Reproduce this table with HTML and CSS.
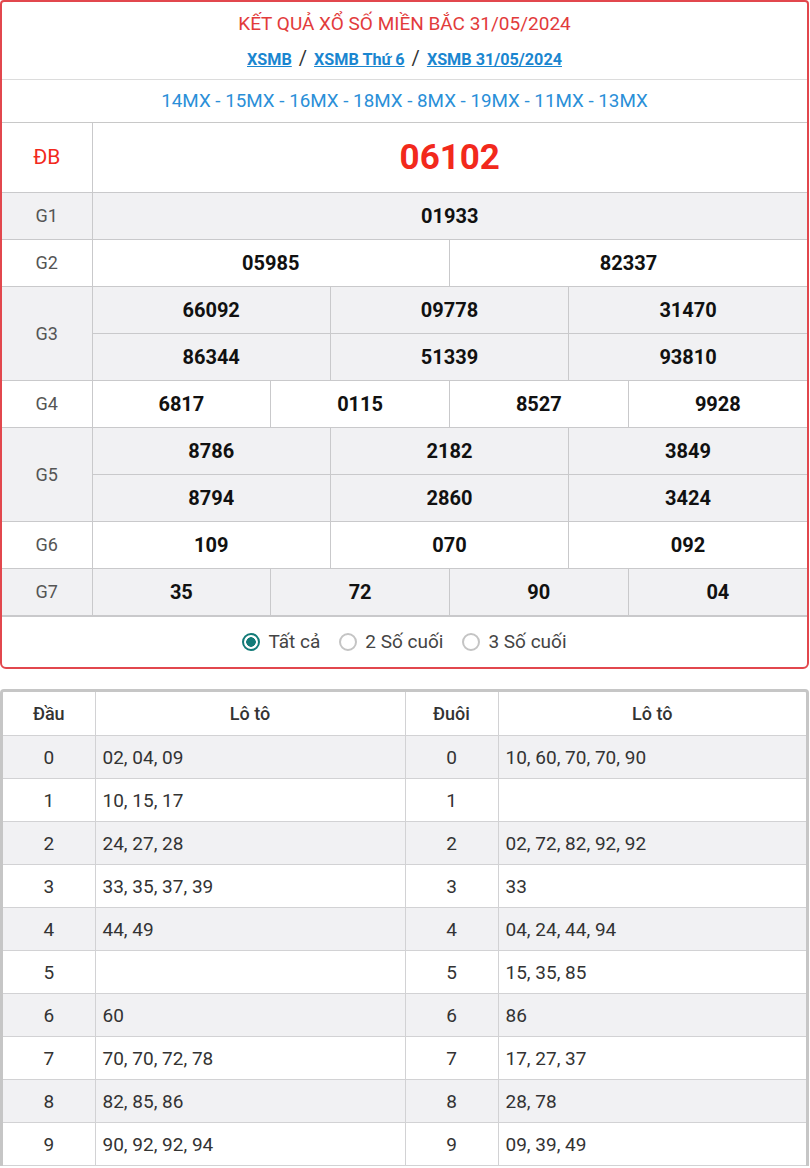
FILE: index.html
```html
<!DOCTYPE html>
<html lang="vi">
<head>
<meta charset="utf-8">
<title>XSMB 31/05/2024</title>
<link rel="stylesheet" href="styles.css">
</head>
<body>
<div class="card result">
  <div class="head">
    <h1 class="title">KẾT QUẢ XỔ SỐ MIỀN BẮC 31/05/2024</h1>
    <div class="links"><a href="#">XSMB</a><span class="sep">/</span><a href="#">XSMB Thứ 6</a><span class="sep">/</span><a href="#">XSMB 31/05/2024</a></div>
  </div>
  <div class="codes">14MX - 15MX - 16MX - 18MX - 8MX - 19MX - 11MX - 13MX</div>
  <table class="prizes">
    <colgroup>
      <col class="c-label">
      <col><col><col><col><col><col><col><col><col><col><col><col>
    </colgroup>
    <tr class="row-db">
      <td class="lbl db-lbl">ĐB</td>
      <td class="num db-num" colspan="12">06102</td>
    </tr>
    <tr class="alt">
      <td class="lbl">G1</td>
      <td class="num" colspan="12">01933</td>
    </tr>
    <tr>
      <td class="lbl">G2</td>
      <td class="num" colspan="6">05985</td>
      <td class="num" colspan="6">82337</td>
    </tr>
    <tr class="alt">
      <td class="lbl" rowspan="2">G3</td>
      <td class="num" colspan="4">66092</td>
      <td class="num" colspan="4">09778</td>
      <td class="num" colspan="4">31470</td>
    </tr>
    <tr class="alt">
      <td class="num" colspan="4">86344</td>
      <td class="num" colspan="4">51339</td>
      <td class="num" colspan="4">93810</td>
    </tr>
    <tr>
      <td class="lbl">G4</td>
      <td class="num" colspan="3">6817</td>
      <td class="num" colspan="3">0115</td>
      <td class="num" colspan="3">8527</td>
      <td class="num" colspan="3">9928</td>
    </tr>
    <tr class="alt">
      <td class="lbl" rowspan="2">G5</td>
      <td class="num" colspan="4">8786</td>
      <td class="num" colspan="4">2182</td>
      <td class="num" colspan="4">3849</td>
    </tr>
    <tr class="alt">
      <td class="num" colspan="4">8794</td>
      <td class="num" colspan="4">2860</td>
      <td class="num" colspan="4">3424</td>
    </tr>
    <tr>
      <td class="lbl">G6</td>
      <td class="num" colspan="4">109</td>
      <td class="num" colspan="4">070</td>
      <td class="num" colspan="4">092</td>
    </tr>
    <tr class="alt">
      <td class="lbl">G7</td>
      <td class="num" colspan="3">35</td>
      <td class="num" colspan="3">72</td>
      <td class="num" colspan="3">90</td>
      <td class="num" colspan="3">04</td>
    </tr>
  </table>
  <div class="filters">
    <label class="opt"><span class="radio checked"></span>Tất cả</label>
    <label class="opt"><span class="radio"></span>2 Số cuối</label>
    <label class="opt"><span class="radio"></span>3 Số cuối</label>
  </div>
</div>

<div class="card loto">
  <table class="lototable">
    <colgroup>
      <col class="c-head"><col class="c-list"><col class="c-tail"><col class="c-list2">
    </colgroup>
    <tr class="lhead">
      <th>Đầu</th><th>Lô tô</th><th>Đuôi</th><th>Lô tô</th>
    </tr>
    <tr class="alt"><td class="d">0</td><td class="l">02, 04, 09</td><td class="d">0</td><td class="l">10, 60, 70, 70, 90</td></tr>
    <tr><td class="d">1</td><td class="l">10, 15, 17</td><td class="d">1</td><td class="l"></td></tr>
    <tr class="alt"><td class="d">2</td><td class="l">24, 27, 28</td><td class="d">2</td><td class="l">02, 72, 82, 92, 92</td></tr>
    <tr><td class="d">3</td><td class="l">33, 35, 37, 39</td><td class="d">3</td><td class="l">33</td></tr>
    <tr class="alt"><td class="d">4</td><td class="l">44, 49</td><td class="d">4</td><td class="l">04, 24, 44, 94</td></tr>
    <tr><td class="d">5</td><td class="l"></td><td class="d">5</td><td class="l">15, 35, 85</td></tr>
    <tr class="alt"><td class="d">6</td><td class="l">60</td><td class="d">6</td><td class="l">86</td></tr>
    <tr><td class="d">7</td><td class="l">70, 70, 72, 78</td><td class="d">7</td><td class="l">17, 27, 37</td></tr>
    <tr class="alt"><td class="d">8</td><td class="l">82, 85, 86</td><td class="d">8</td><td class="l">28, 78</td></tr>
    <tr><td class="d">9</td><td class="l">90, 92, 92, 94</td><td class="d">9</td><td class="l">09, 39, 49</td></tr>
  </table>
</div>
</body>
</html>
```

FILE: styles.css
```css
* { box-sizing: border-box; }
html, body { margin: 0; padding: 0; background: #fff; }
body {
  font-family: Roboto, "Noto Sans", Arial, sans-serif;
  color: #222;
  width: 810px;
}

.card {
  width: 809px;
  background: #fff;
  overflow: hidden;
}

.result {
  border: 2px solid #e2474d;
  border-radius: 4px 4px 6px 6px;
}

.head {
  height: 78px;
  border-bottom: 1px solid #dcdcdc;
  display: flex;
  flex-direction: column;
  align-items: center;
  padding-top: 10px;
}
.title {
  margin: 0;
  font-size: 19px;
  font-weight: 400;
  color: #e23b3b;
  line-height: 24px;
}
.links {
  margin-top: 11px;
  font-size: 16.2px;
  line-height: 22px;
  font-weight: 700;
}
.links a { color: #1a86d0; text-decoration: underline; }
.links .sep { color: #333; font-weight: 400; font-size: 20px; margin: 0 7px; }

.codes {
  height: 43px;
  display: flex;
  align-items: center;
  justify-content: center;
  font-size: 18.8px;
  color: #2a8fd8;
  border-bottom: 1px solid #c8c8c8;
}

.prizes {
  width: 100%;
  border-collapse: collapse;
  table-layout: fixed;
}
.prizes .c-label { width: 90px; }
.prizes td {
  border: 1px solid #c9c9cb;
  height: 47px;
  text-align: center;
  padding: 0;
}
.prizes tr:first-child td { border-top: none; }
.prizes td:last-child { border-right: none; }
.prizes td.lbl { border-left: none; }
.prizes tr.alt td { background: #f1f1f3; }
.prizes .row-db td { height: 69px; }
.lbl {
  font-size: 18px;
  color: #555;
}
.db-lbl { color: #f2291c; font-size: 21px; }
.num {
  font-size: 20px;
  font-weight: 700;
  color: #111;
}
.db-num {
  font-size: 35px;
  color: #f2291c;
}

.filters {
  height: 51px;
  display: flex;
  align-items: center;
  justify-content: center;
  gap: 19px;
  border-top: 1px solid #c9c9cb;
}
.opt {
  display: flex;
  align-items: center;
  gap: 8px;
  font-size: 19px;
  color: #444;
}
.radio {
  width: 18px;
  height: 18px;
  border-radius: 50%;
  border: 2px solid #c4c4c4;
  background: #fff;
  flex: none;
}
.radio.checked {
  border-color: #137b78;
  background: radial-gradient(circle, #137b78 0 4.5px, #fff 5px);
}

.loto {
  margin-top: 20px;
  border: 3px solid #c6c6c6;
  border-bottom: none;
  border-radius: 4px 4px 0 0;
}
.lototable {
  width: 100%;
  border-collapse: collapse;
  table-layout: fixed;
}
.c-head { width: 92px; }
.c-list { width: 310px; }
.c-tail { width: 93px; }
.lototable th, .lototable td {
  border: 1px solid #d2d2d4;
  padding: 0;
  font-size: 19px;
  color: #333;
}
.lototable tr:first-child th { border-top: none; }
.lototable th:first-child, .lototable td:first-child { border-left: none; }
.lototable th:last-child, .lototable td:last-child { border-right: none; }
.lototable th {
  height: 44px;
  font-weight: 500;
  font-size: 18px;
  text-align: center;
}
.lototable td { height: 43px; }
.lototable tr.alt td { background: #f1f1f3; }
.lototable td.d { text-align: center; }
.lototable td.l { text-align: left; padding-left: 7px; }
```
